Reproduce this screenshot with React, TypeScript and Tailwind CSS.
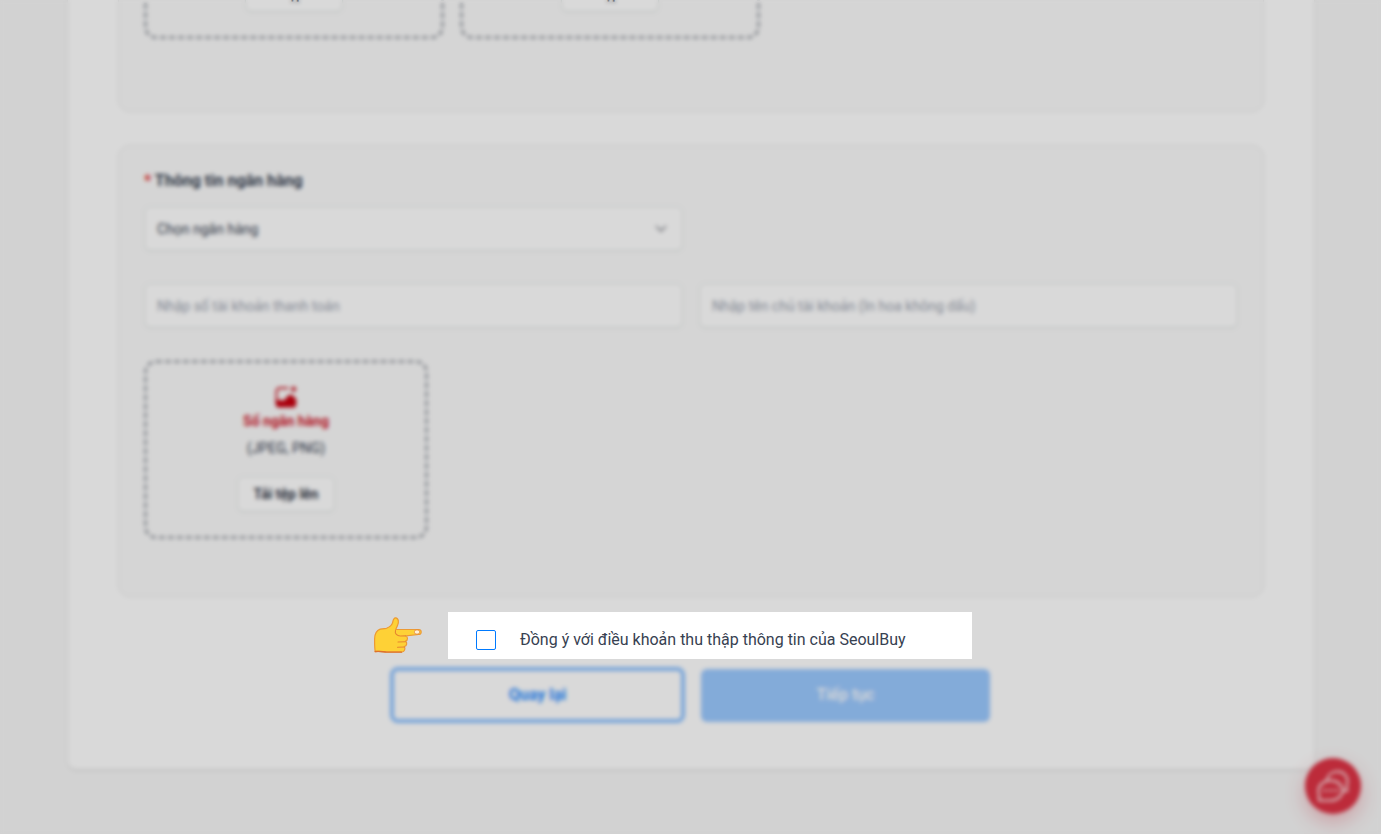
import { type ReactNode } from 'react';
import { clsx } from 'clsx';

const FIELD = 'h-[45px] w-full rounded-md border border-[#e3e8e6] bg-white px-3 text-sm shadow-xs outline-none';

function Panel({ className, children }: { className?: string; children: ReactNode }) {
    return (
        <section className={clsx('rounded-xl border border-[#ececec] bg-[#fbfbfb] px-[25px] pt-6', className)}>
            {children}
        </section>
    );
}

function UploadIcon() {
    return (
        <svg className="h-6 w-6 text-[#c8000f]" viewBox="0 0 24 24" fill="none" aria-hidden="true">
            <path d="M13.5 3.2H5.5a3 3 0 0 0-3 3v11" stroke="currentColor" strokeWidth="1.7" strokeLinecap="round" />
            <path d="M19.6 1.8v4.6M17.3 4.1h4.6" stroke="currentColor" strokeWidth="1.8" strokeLinecap="round" />
            <path
                d="M1.7 15.3c1.8-.8 4-.8 5.8-.1 1.4.5 2.6.2 3.6-1l2.6-3.3c1.3-1.6 3.4-1.6 4.8-.3l3.8 3.3v5a3.6 3.6 0 0 1-3.6 3.6H5.3a3.6 3.6 0 0 1-3.6-3.6v-3.6Z"
                fill="currentColor"
            />
        </svg>
    );
}

function UploadBox({ title, className }: { title: string; className: string }) {
    return (
        <div
            className={clsx(
                'flex h-[179px] flex-col items-center rounded-xl border-[3px] border-dashed border-[#acafb5] pt-[22px]',
                className
            )}
        >
            <UploadIcon />
            <p className="mt-[2px] text-sm leading-5 font-bold text-[#d0162a]">{title}</p>
            <p className="mt-[7px] text-sm leading-5 text-[#374151]">(JPEG, PNG)</p>
            <button
                type="button"
                className="mt-[18px] h-9 rounded-md border border-[#e3e8e6] bg-white px-4 text-sm font-semibold text-[#1f2937] shadow-xs"
            >
                Tải tệp lên
            </button>
        </div>
    );
}

function PointingHand() {
    return (
        <svg className="absolute top-1 right-full mr-6 h-10 w-[52px]" viewBox="0 0 52 40" aria-hidden="true">
            <path
                d="M2.6 23c0-5.500 2-8.500 5.600-9.900l6.300-.8c3.600-1.500 5.500-3.400 6.100-5.700.5-2.200.8-4.900 3-4.800 3.200.3 3.400 4.500 1.900 7.700l-1.800 4h23c3.300 0 3.300 5 0 5l-13.200 1.300c2.600.9 2.700 4.700 0 5.400 2 1.200 1.500 4.700-1.200 5.300 1.300 1.800.4 5.400-2.300 5.500H15c-3.500 0-6-1.300-11.800-.4-.7-4.300-.6-8-.6-12.600Z"
                fill="#fed136"
                stroke="#ec9a35"
                strokeWidth="1.2"
                strokeLinejoin="round"
            />
            <path
                d="M23.500 14.500c-.9 3.300 1.500 5.500 4.800 5.500l5.200-.1M26 26l7.300-.2M25.500 31.300l7-.3"
                fill="none"
                stroke="#e6862f"
                strokeWidth="1.1"
                strokeLinecap="round"
            />
            <path
                d="M3.2 35.500c5-.8 8 .7 11.800.7h14.500"
                fill="none"
                stroke="#dd712d"
                strokeWidth="1.3"
                strokeLinecap="round"
            />
            <rect x="42.500" y="14" width="5" height="4" rx="1.600" fill="#fff3d8" stroke="#e4863b" strokeWidth=".8" />
        </svg>
    );
}

function ChatIcon() {
    return (
        <svg
            className="h-8 w-8"
            viewBox="0 0 32 32"
            fill="none"
            stroke="#fde3e5"
            strokeWidth="2"
            strokeLinejoin="round"
            strokeLinecap="round"
            aria-hidden="true"
        >
            <path d="M2 30.500V25C1.600 23.500 1.500 22 1.500 20.500 1.500 14.800 6.800 10.500 13.500 10.500S25.500 14.800 25.500 20.500 20.200 30.500 13.500 30.500Z" />
            <path d="M9.500 10.800C10.500 5 15 1.500 20.500 1.500c6 0 10 4.300 10 10 0 2-.3 3.500-1 5l.8 4.500h-4.800" />
            <path d="M8 20.500h.1M13.500 20.500h.1M19 20.500h.1" strokeWidth="2.800" />
        </svg>
    );
}

export default function App() {
    return (
        <div className="min-h-screen overflow-hidden bg-[#f7f7f7] pb-16 font-[Roboto,sans-serif] text-[#374151]">
            <main className="mr-[67px] ml-[68px] rounded-b-lg bg-white px-[50px] pb-[46px] shadow-sm">
                {/* Identity papers, mostly scrolled past */}
                <Panel className="-mt-[165px] mb-[33px] pb-[72px]">
                    <div className="flex gap-4">
                        <UploadBox title="Mặt trước" className="w-[300px]" />
                        <UploadBox title="Mặt sau" className="w-[300px]" />
                    </div>
                </Panel>

                {/* Bank details */}
                <Panel className="pb-[57px]">
                    <h2 className="text-base leading-[22px] font-bold">
                        <span className="text-[#e02424]">*</span> Thông tin ngân hàng
                    </h2>
                    <div className="mt-[14px] grid grid-cols-2 gap-x-4 gap-y-8">
                        <div className="relative">
                            <select aria-label="Chọn ngân hàng" className={clsx(FIELD, 'appearance-none text-[#374151]')}>
                                <option>Chọn ngân hàng</option>
                            </select>
                            <svg
                                className="pointer-events-none absolute top-4 right-4 h-3 w-3"
                                viewBox="0 0 12 12"
                                fill="none"
                                stroke="#8b8e94"
                                strokeWidth="1.6"
                            >
                                <path d="M1 4l5 5 5-5" />
                            </svg>
                        </div>
                        <input
                            aria-label="Số tài khoản"
                            placeholder="Nhập số tài khoản thanh toán"
                            className={clsx(FIELD, 'col-start-1 placeholder:text-[#9ca3af]')}
                        />
                        <input
                            aria-label="Tên chủ tài khoản"
                            placeholder="Nhập tên chủ tài khoản (In hoa không dấu)"
                            className={clsx(FIELD, 'placeholder:text-[#9ca3af]')}
                        />
                    </div>
                    <UploadBox title="Sổ ngân hàng" className="mt-8 w-[284px]" />
                </Panel>

                {/* Consent row stays above the dimmed page */}
                <div className="mt-[15px] flex justify-center pl-[38px]">
                    <div className="relative z-20 w-[524px] bg-white px-7 pt-[18px] pb-[9px]">
                        <PointingHand />
                        <label className="flex h-5 items-center gap-6 text-base leading-5">
                            <input
                                type="checkbox"
                                className="h-5 w-5 appearance-none rounded-xs border border-[#007aff] bg-white checked:bg-[#007aff]"
                            />
                            Đồng ý với điều khoản thu thập thông tin của SeoulBuy
                        </label>
                    </div>
                </div>

                <div className="mx-auto mt-2 flex max-w-[602px] items-center gap-4">
                    <button
                        type="button"
                        className="h-14 w-[295px] rounded-lg border-4 border-[#8cc1ff] bg-white text-base font-bold text-[#2b8cff]"
                    >
                        Quay lại
                    </button>
                    <button type="button" className="h-[53px] w-[289px] rounded-md bg-[#9bc9ff] text-base font-medium text-white">
                        Tiếp tục
                    </button>
                </div>
            </main>

            <button
                type="button"
                aria-label="Chat"
                className="fixed right-5 bottom-5 flex h-14 w-14 items-center justify-center rounded-full bg-[#de3345] shadow-[0_8px_20px_rgba(227,49,68,0.3)]"
            >
                <ChatIcon />
            </button>

            {/* Dimming backdrop */}
            <div className="fixed inset-0 z-10 bg-black/15 backdrop-blur-[2px]" />
        </div>
    );
}
